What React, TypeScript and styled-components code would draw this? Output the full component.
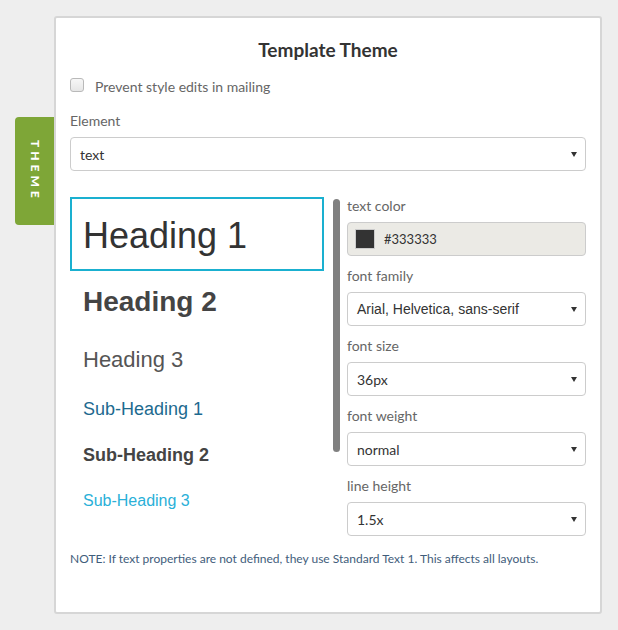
import React from "react";
import styled, { createGlobalStyle } from "styled-components";

const GlobalStyle = createGlobalStyle`
  html, body {
    margin: 0;
    padding: 0;
    background: #eeeeee;
  }
  * {
    box-sizing: border-box;
  }
`;

const UI_FONT = `Lato, "Open Sans", "Noto Sans", sans-serif`;
const PREVIEW_FONT = `"Liberation Sans", Arial, sans-serif`;

type Field =
  | { label: string; kind: "color"; value: string }
  | { label: string; kind: "select"; value: string; arial?: boolean };

const fields: Field[] = [
  { label: "text color", kind: "color", value: "#333333" },
  { label: "font family", kind: "select", value: "Arial, Helvetica, sans-serif", arial: true },
  { label: "font size", kind: "select", value: "36px" },
  { label: "font weight", kind: "select", value: "normal" },
  { label: "line height", kind: "select", value: "1.5x" },
];

export default function App() {
  return (
    <>
      <GlobalStyle />
      <Page>
        <Tab>
          <TabText>THEME</TabText>
        </Tab>
        <Panel>
          <Title>Template Theme</Title>
          <CheckRow>
            <Checkbox />
            <CheckLabel>Prevent style edits in mailing</CheckLabel>
          </CheckRow>
          <FieldLabel $top={13}>Element</FieldLabel>
          <Select>
            <SelectValue>text</SelectValue>
            <Caret />
          </Select>

          <Columns>
            <Preview>
              <Heading1Box>Heading 1</Heading1Box>
              <Heading2>Heading 2</Heading2>
              <Heading3>Heading 3</Heading3>
              <SubHeading1>Sub-Heading 1</SubHeading1>
              <SubHeading2>Sub-Heading 2</SubHeading2>
              <SubHeading3>Sub-Heading 3</SubHeading3>
            </Preview>
            <Scrollbar />
            <Properties>
              {fields.map((field, i) => (
                <div key={field.label}>
                  <FieldLabel $top={i === 0 ? 0 : 10}>{field.label}</FieldLabel>
                  {field.kind === "color" ? (
                    <ColorInput>
                      <Swatch style={{ background: field.value }} />
                      <ColorValue>{field.value}</ColorValue>
                    </ColorInput>
                  ) : (
                    <Select>
                      <SelectValue $arial={field.arial}>{field.value}</SelectValue>
                      <Caret />
                    </Select>
                  )}
                </div>
              ))}
            </Properties>
          </Columns>

          <Note>
            NOTE: If text properties are not defined, they use Standard Text 1. This affects all layouts.
          </Note>
        </Panel>
      </Page>
    </>
  );
}

const Page = styled.div`
  display: flex;
  align-items: flex-start;
  padding: 16px 0 0 15px;
`;

const Tab = styled.div`
  width: 39px;
  height: 108px;
  margin-top: 101px;
  background: #7ea637;
  border-radius: 4px 0 0 4px;
  display: flex;
  align-items: center;
  justify-content: center;
`;

const TabText = styled.span`
  writing-mode: vertical-rl;
  font-family: ${UI_FONT};
  font-weight: 900;
  font-size: 12px;
  letter-spacing: 4px;
  color: #ffffff;
  margin-left: 1px;
`;

const Panel = styled.div`
  width: 548px;
  height: 598px;
  background: #ffffff;
  border: 2px solid #d6d6d6;
  border-radius: 3px;
  padding: 0 14px;
  font-family: ${UI_FONT};
`;

const Title = styled.h2`
  margin: 20px 0 0;
  font-size: 19px;
  line-height: 24px;
  font-weight: 700;
  color: #333333;
  text-align: center;
`;

const CheckRow = styled.label`
  display: flex;
  align-items: center;
  height: 24px;
  margin-top: 12px;
`;

const Checkbox = styled.span`
  width: 14px;
  height: 14px;
  border: 1px solid #b9b9b9;
  border-radius: 3px;
  background: linear-gradient(#f7f7f7, #e6e6e6);
  margin-top: -2px;
`;

const CheckLabel = styled.span`
  margin-left: 11px;
  font-size: 14px;
  color: #666666;
`;

const FieldLabel = styled.div<{ $top: number }>`
  margin-top: ${({ $top }) => $top}px;
  font-size: 14px;
  line-height: 20px;
  color: #666666;
`;

const Select = styled.div`
  margin-top: 6px;
  height: 34px;
  border: 1px solid #cccccc;
  border-radius: 4px;
  background: #ffffff;
  display: flex;
  align-items: center;
  justify-content: space-between;
  padding: 0 8px 0 9px;
`;

const SelectValue = styled.span<{ $arial?: boolean }>`
  font-family: ${({ $arial }) => ($arial ? PREVIEW_FONT : UI_FONT)};
  font-size: 14px;
  color: #333333;
`;

const Caret = styled.span`
  width: 0;
  height: 0;
  border-left: 3px solid transparent;
  border-right: 3px solid transparent;
  border-top: 5px solid #333333;
  margin-top: 1px;
`;

const Columns = styled.div`
  display: flex;
  align-items: flex-start;
  margin-top: 26px;
`;

const Preview = styled.div`
  width: 254px;
  font-family: ${PREVIEW_FONT};
`;

const Heading1Box = styled.div`
  height: 74px;
  border: 2px solid #1ab0d0;
  padding: 2px 11px 0;
  font-size: 36px;
  line-height: 70px;
  color: #333333;
`;

const PreviewLine = styled.div`
  padding-left: 13px;
  white-space: nowrap;
`;

const Heading2 = styled(PreviewLine)`
  font-size: 28px;
  font-weight: 700;
  line-height: 62px;
  color: #444444;
`;

const Heading3 = styled(PreviewLine)`
  font-size: 22px;
  line-height: 53px;
  color: #555555;
`;

const SubHeading1 = styled(PreviewLine)`
  font-size: 18px;
  line-height: 47px;
  color: #1d6a8f;
`;

const SubHeading2 = styled(PreviewLine)`
  font-size: 18px;
  font-weight: 700;
  line-height: 45px;
  color: #444444;
`;

const SubHeading3 = styled(PreviewLine)`
  font-size: 16px;
  line-height: 46px;
  color: #2ab0d8;
`;

const Scrollbar = styled.div`
  width: 7px;
  height: 253px;
  margin: 2px 0 0 9px;
  border-radius: 4px;
  background: #808080;
`;

const Properties = styled.div`
  width: 239px;
  margin: -1px 0 0 7px;
`;

const ColorInput = styled.div`
  margin-top: 6px;
  height: 34px;
  border: 1px solid #cccccc;
  border-radius: 4px;
  background: #ebeae5;
  display: flex;
  align-items: center;
  padding: 0 8px 0 7px;
`;

const Swatch = styled.span`
  width: 20px;
  height: 20px;
  border: 1px solid #cccccc;
`;

const ColorValue = styled.span`
  margin-left: 9px;
  font-size: 13px;
  color: #333333;
`;

const Note = styled.p`
  margin: 15px 0 0;
  font-size: 12px;
  line-height: 16px;
  color: #3f5d7b;
`;
